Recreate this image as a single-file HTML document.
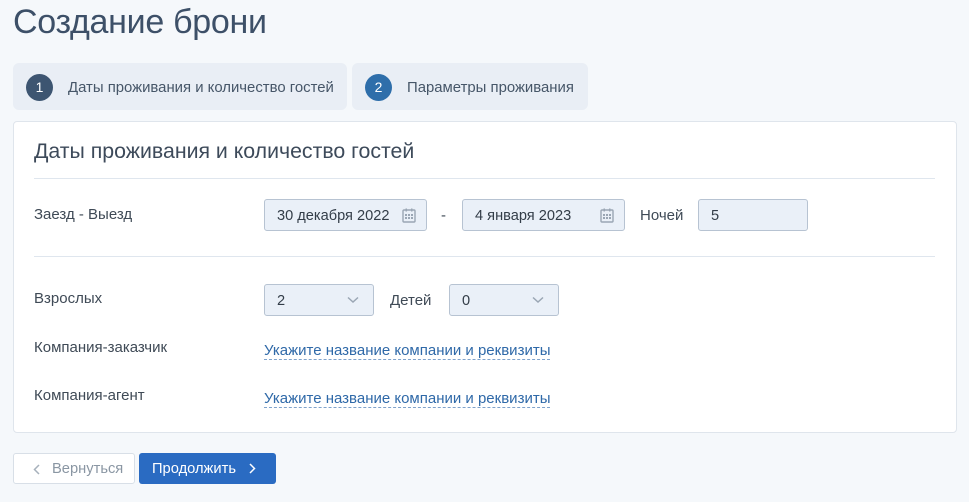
<!DOCTYPE html>
<html><head><meta charset="utf-8"><style>
*{box-sizing:border-box;margin:0;padding:0}
body{width:969px;height:502px;background:#f5f8fb;font-family:"Liberation Sans",sans-serif;color:#3f4a56;position:relative;overflow:hidden;line-height:1.15}
.a{position:absolute}
h1{position:absolute;left:13px;top:3px;font-size:34px;font-weight:normal;color:#3d5068;letter-spacing:-0.3px}
.tab{position:absolute;top:63px;height:47px;background:#e9eef5;border-radius:6px;font-size:14.9px;color:#465668}
.circ{position:absolute;left:13px;top:11px;width:27px;height:27px;border-radius:50%;color:#fff;text-align:center;line-height:27px;font-size:14px}
.tab span.t{position:absolute;left:55px;top:17px;white-space:nowrap}
.card{position:absolute;left:13px;top:121px;width:944px;height:312px;background:#fff;border:1px solid #dfe5ec;border-radius:4px}
.lbl{position:absolute;font-size:15px;color:#3f4a56}
.inp{position:absolute;height:32px;background:#eaf0f8;border:1px solid #b7c3d2;border-radius:3px;font-size:14.6px;color:#333d48;padding-left:12px;padding-top:8px}
.line{position:absolute;left:34px;width:901px;height:1px;background:#dfe6ee}
.link{position:absolute;left:264px;font-size:15px;color:#2f69a8;border-bottom:1px dashed #7fa3cc;line-height:17px}
.cal{position:absolute;right:10px;top:8px}
.chev{position:absolute;right:14px;top:11px}
.btn{position:absolute;top:453px;height:31px;border-radius:3px;font-size:14.7px;padding-top:7px}
</style></head><body>
<h1>Создание брони</h1>
<div class="tab" style="left:13px;width:334px"><div class="circ" style="background:#3d5571">1</div><span class="t">Даты проживания и количество гостей</span></div>
<div class="tab" style="left:352px;width:236px"><div class="circ" style="background:#2e6eaa">2</div><span class="t">Параметры проживания</span></div>
<div class="card"></div>
<div class="a" style="left:34px;top:139px;font-size:21.3px;color:#3d4a5a">Даты проживания и количество гостей</div>
<div class="line" style="top:178px"></div>
<div class="lbl" style="left:34px;top:206px">Заезд - Выезд</div>
<div class="inp" style="left:264px;top:199px;width:163px">30 декабря 2022<svg class="cal" width="14" height="15" viewBox="0 0 14 15"><rect x="1" y="2" width="12" height="12" rx="1" fill="none" stroke="#9aa6b4" stroke-width="1.4"/><rect x="3.5" y="0.5" width="1.5" height="3" fill="#9aa6b4"/><rect x="9" y="0.5" width="1.5" height="3" fill="#9aa6b4"/><g fill="#9aa6b4"><rect x="3" y="6" width="2" height="2"/><rect x="6" y="6" width="2" height="2"/><rect x="9" y="6" width="2" height="2"/><rect x="3" y="9" width="2" height="2"/><rect x="6" y="9" width="2" height="2"/><rect x="9" y="9" width="2" height="2"/></g></svg></div>
<div class="lbl" style="left:441px;top:207px">-</div>
<div class="inp" style="left:462px;top:199px;width:163px">4 января 2023<svg class="cal" width="14" height="15" viewBox="0 0 14 15"><rect x="1" y="2" width="12" height="12" rx="1" fill="none" stroke="#9aa6b4" stroke-width="1.4"/><rect x="3.5" y="0.5" width="1.5" height="3" fill="#9aa6b4"/><rect x="9" y="0.5" width="1.5" height="3" fill="#9aa6b4"/><g fill="#9aa6b4"><rect x="3" y="6" width="2" height="2"/><rect x="6" y="6" width="2" height="2"/><rect x="9" y="6" width="2" height="2"/><rect x="3" y="9" width="2" height="2"/><rect x="6" y="9" width="2" height="2"/><rect x="9" y="9" width="2" height="2"/></g></svg></div>
<div class="lbl" style="left:640px;top:207px">Ночей</div>
<div class="inp" style="left:698px;top:199px;width:110px">5</div>
<div class="line" style="top:256px"></div>
<div class="lbl" style="left:34px;top:290px">Взрослых</div>
<div class="inp" style="left:264px;top:284px;width:110px">2<svg class="chev" width="12" height="8" viewBox="0 0 12 8"><path d="M1 1.5L6 6L11 1.5" fill="none" stroke="#9aa6b4" stroke-width="1.5"/></svg></div>
<div class="lbl" style="left:390px;top:292px">Детей</div>
<div class="inp" style="left:449px;top:284px;width:110px">0<svg class="chev" width="12" height="8" viewBox="0 0 12 8"><path d="M1 1.5L6 6L11 1.5" fill="none" stroke="#9aa6b4" stroke-width="1.5"/></svg></div>
<div class="lbl" style="left:34px;top:339px">Компания-заказчик</div>
<div class="link" style="top:342px">Укажите название компании и реквизиты</div>
<div class="lbl" style="left:34px;top:387px">Компания-агент</div>
<div class="link" style="top:390px">Укажите название компании и реквизиты</div>
<div class="btn" style="left:13px;width:122px;background:#fff;border:1px solid #d8dfe7;color:#8a96a3;padding-left:38px">Вернуться<svg class="a" style="left:19px;top:10px" width="7" height="11" viewBox="0 0 7 11"><path d="M6 1L1.5 5.5L6 10" fill="none" stroke="#a7b1bc" stroke-width="1.5"/></svg></div>
<div class="btn" style="left:139px;width:137px;background:#2a6bc2;color:#fff;padding-left:13px;padding-top:8px">Продолжить<svg class="a" style="left:110px;top:10px" width="7" height="11" viewBox="0 0 7 11"><path d="M1 1L5.5 5.5L1 10" fill="none" stroke="#fff" stroke-width="1.5"/></svg></div>
</body></html>
